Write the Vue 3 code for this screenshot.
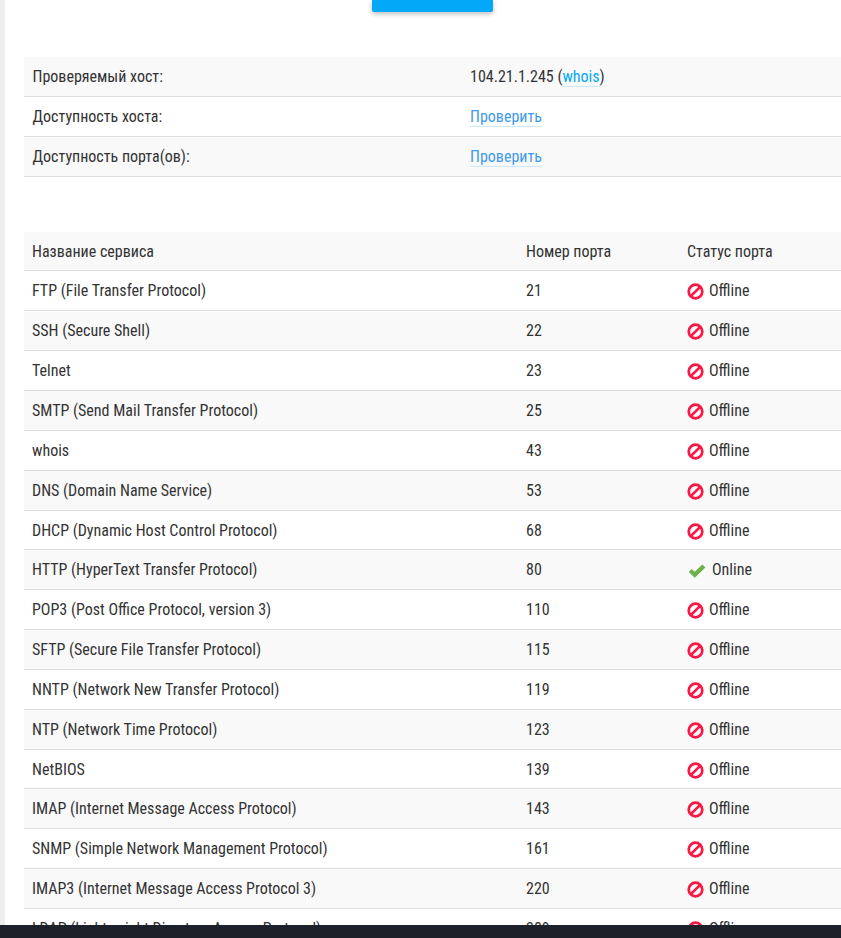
<script setup>
const info = [
  { label: 'Проверяемый хост:', host: true },
  { label: 'Доступность хоста:', link: 'Проверить' },
  { label: 'Доступность порта(ов):', link: 'Проверить' },
]
const rows = [
  ['FTP (File Transfer Protocol)', 21],
  ['SSH (Secure Shell)', 22],
  ['Telnet', 23],
  ['SMTP (Send Mail Transfer Protocol)', 25],
  ['whois', 43],
  ['DNS (Domain Name Service)', 53],
  ['DHCP (Dynamic Host Control Protocol)', 68],
  ['HTTP (HyperText Transfer Protocol)', 80, true],
  ['POP3 (Post Office Protocol, version 3)', 110],
  ['SFTP (Secure File Transfer Protocol)', 115],
  ['NNTP (Network New Transfer Protocol)', 119],
  ['NTP (Network Time Protocol)', 123],
  ['NetBIOS', 139],
  ['IMAP (Internet Message Access Protocol)', 143],
  ['SNMP (Simple Network Management Protocol)', 161],
  ['IMAP3 (Internet Message Access Protocol 3)', 220],
  ['LDAP (Lightweight Directory Access Protocol)', 389],
]
</script>

<template>
  <div class="page">
    <div class="content">
      <div class="btn-wrap"><div class="btn"></div></div>
      <div class="info">
        <div v-for="(r, i) in info" :key="i" class="info-row">
          <div class="info-label">{{ r.label }}</div>
          <div class="info-value">
            <template v-if="r.host">104.21.1.245 (<a class="link">whois</a>)</template>
            <a v-else class="link alt">{{ r.link }}</a>
          </div>
        </div>
      </div>
      <div class="ports">
        <div class="row head">
          <div class="c1">Название сервиса</div>
          <div class="c2">Номер порта</div>
          <div class="c3">Статус порта</div>
        </div>
        <div v-for="r in rows" :key="r[1]" class="row">
          <div class="c1">{{ r[0] }}</div>
          <div class="c2">{{ r[1] }}</div>
          <div class="c3">
            <template v-if="r[2]">
              <svg class="ico ok" width="18" height="14" viewBox="0 0 18 14"><path d="M.8 8 L3.6 5 L6.8 7.8 L14.4 .6 L17.4 3.6 L6.8 13.8 Z" fill="#6eb049"/></svg>
              <span>Online</span>
            </template>
            <template v-else>
              <svg class="ico" width="17" height="17" viewBox="0 0 17 17"><circle cx="8.5" cy="8.5" r="6.8" fill="none" stroke="#fb1745" stroke-width="2.7"/><path d="M13.4 3.6 L3.6 13.4" stroke="#fb1745" stroke-width="2.7"/></svg>
              <span>Offline</span>
            </template>
          </div>
        </div>
      </div>
    </div>
    <div class="footer"></div>
  </div>
</template>

<style scoped>
.page {
  position: relative;
  width: 841px;
  height: 938px;
  overflow: hidden;
  background: #fff;
  box-shadow: inset 5px 0 0 #eeeeee;
  font-family: "Roboto Condensed", Roboto, sans-serif;
  font-size: 16px;
  font-stretch: 75%;
  color: #333;
}
.content { padding-left: 24px; }
.btn-wrap { display: flex; padding-left: 348px; height: 57px; }
.btn {
  width: 121px;
  height: 12px;
  background: #03a9f8;
  border-radius: 0 0 2px 2px;
  box-shadow: 0 2px 5px rgba(0, 0, 0, .26);
}
.info-row {
  display: flex;
  align-items: center;
  height: 39px;
  padding-left: 8.5px;
  border-bottom: 1px solid #ddd;
}
.info-row:nth-child(odd) { background: #f9f9f9; }
.info-label { width: 437.5px; }
.link { color: #03a9f4; border-bottom: 1px solid #cde9f7; }
.link.alt { color: #3f9ae8; }
.ports { margin-top: 55px; }
.row {
  display: flex;
  align-items: center;
  height: 39.83px;
  box-sizing: border-box;
  padding-left: 8px;
  border-bottom: 1px solid #ddd;
}
.row:nth-child(odd) { background: #f9f9f9; }
.row.head { height: 39px; padding-top: 0.8px; background: #f9f9f9; }
.row:nth-child(2) { height: 40px; margin-bottom: 0.5px; }
.c1 { width: 494px; }
.c2 { width: 161px; }
.c3 { display: flex; align-items: center; gap: 5px; }
.ico { flex: none; margin-top: 2px; }
.ok { margin-left: 1px; margin-right: 1px; }
.footer {
  position: absolute;
  left: 0;
  right: 0;
  bottom: 0;
  height: 13px;
  background: #1d2129;
}
</style>
